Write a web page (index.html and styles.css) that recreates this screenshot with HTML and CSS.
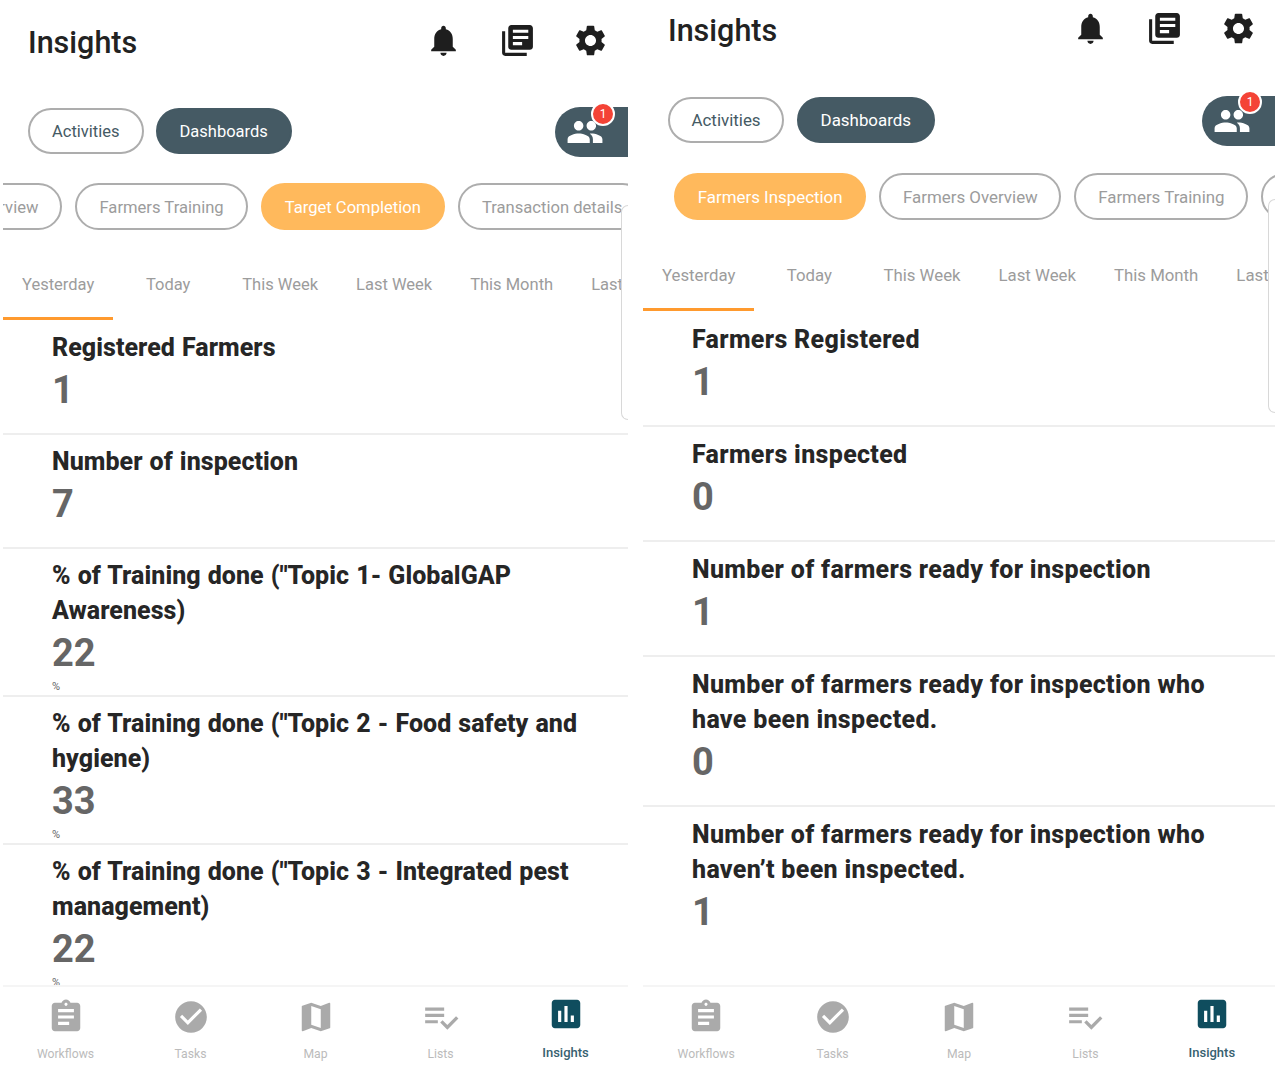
FILE: index.html
```html
<!DOCTYPE html>
<html>

<head>
    <meta charset="UTF-8">
    <meta name="viewport" content="width=device-width,initial-scale=1">
    <link rel="stylesheet" href="styles.css">
    <title>Insights</title>
</head>

<body>
    <svg class="icon-defs" width="0" height="0">
        <symbol id="i-bell" viewBox="0 0 24 24"><path d="M12 22c1.1 0 2-.9 2-2h-4c0 1.1.89 2 2 2zm6-6v-5c0-3.07-1.64-5.64-4.5-6.32V4c0-.83-.67-1.5-1.5-1.5s-1.5.67-1.5 1.5v.68C7.63 5.36 6 7.92 6 11v5l-2 2v1h16v-1l-2-2z"/></symbol>
        <symbol id="i-books" viewBox="0 0 24 24"><path d="M4 6H2v14c0 1.1.9 2 2 2h14v-2H4V6zm16-4H8c-1.1 0-2 .9-2 2v12c0 1.1.9 2 2 2h12c1.1 0 2-.9 2-2V4c0-1.1-.9-2-2-2zm-1 9H9V9h10v2zm-4 4H9v-2h6v2zm4-8H9V5h10v2z"/></symbol>
        <symbol id="i-gear" viewBox="0 0 24 24"><path d="M19.14 12.94c.04-.3.06-.61.06-.94 0-.32-.02-.64-.07-.94l2.03-1.58c.18-.14.23-.41.12-.61l-1.92-3.32c-.12-.22-.37-.29-.59-.22l-2.39.96c-.5-.38-1.03-.7-1.62-.94l-.36-2.54c-.04-.24-.24-.41-.48-.41h-3.84c-.24 0-.43.17-.47.41l-.36 2.54c-.59.24-1.13.57-1.62.94l-2.39-.96c-.22-.08-.47 0-.59.22L2.74 8.87c-.12.21-.08.47.12.61l2.03 1.58c-.05.3-.09.63-.09.94s.02.64.07.94l-2.03 1.58c-.18.14-.23.41-.12.61l1.92 3.32c.12.22.37.29.59.22l2.39-.96c.5.38 1.03.7 1.62.94l.36 2.54c.05.24.24.41.48.41h3.84c.24 0 .44-.17.47-.41l.36-2.54c.59-.24 1.13-.56 1.62-.94l2.39.96c.22.08.47 0 .59-.22l1.92-3.32c.12-.22.07-.47-.12-.61l-2.01-1.58zM12 15.6c-1.98 0-3.6-1.62-3.6-3.6s1.62-3.6 3.6-3.6 3.6 1.62 3.6 3.6-1.62 3.6-3.6 3.6z"/></symbol>
        <symbol id="i-people" viewBox="0 0 24 24"><path d="M16 11c1.66 0 2.99-1.34 2.99-3S17.66 5 16 5c-1.66 0-3 1.34-3 3s1.34 3 3 3zm-8 0c1.66 0 2.99-1.34 2.99-3S9.66 5 8 5C6.34 5 5 6.34 5 8s1.34 3 3 3zm0 2c-2.33 0-7 1.17-7 3.5V19h14v-2.5c0-2.33-4.67-3.5-7-3.5zm8 0c-.29 0-.62.02-.97.05 1.16.84 1.97 1.97 1.97 3.45V19h6v-2.5c0-2.33-4.67-3.5-7-3.5z"/></symbol>
        <symbol id="i-workflows" viewBox="0 0 24 24"><path d="M19 3h-4.18C14.4 1.84 13.3 1 12 1c-1.3 0-2.4.84-2.82 2H5c-1.1 0-2 .9-2 2v14c0 1.1.9 2 2 2h14c1.1 0 2-.9 2-2V5c0-1.1-.9-2-2-2zm-7 0c.55 0 1 .45 1 1s-.45 1-1 1-1-.45-1-1 .45-1 1-1zm2 14H7v-2h7v2zm3-4H7v-2h10v2zm0-4H7V7h10v2z"/></symbol>
        <symbol id="i-tasks" viewBox="0 0 24 24"><path d="M12 2C6.48 2 2 6.48 2 12s4.48 10 10 10 10-4.48 10-10S17.52 2 12 2zm-2 15l-5-5 1.41-1.41L10 14.17l7.59-7.59L19 8l-9 9z"/></symbol>
        <symbol id="i-map" viewBox="0 0 24 24"><path d="M20.5 3l-.16.03L15 5.1 9 3 3.36 4.9c-.21.07-.36.25-.36.48V20.5c0 .28.22.5.5.5l.16-.03L9 18.9l6 2.1 5.64-1.9c.21-.07.36-.25.36-.48V3.5c0-.28-.22-.5-.5-.5zM15 19l-6-2.11V5l6 2.11V19z"/></symbol>
        <symbol id="i-lists" viewBox="0 0 24 24"><path d="M14 10H2v2h12v-2zm0-4H2v2h12V6zM2 16h8v-2H2v2zm19.5-4.5L23 13l-6.99 7-4.51-4.5L13 14l3.01 3 5.49-5.5z"/></symbol>
        <symbol id="i-insights" viewBox="0 0 24 24"><path d="M19 3H5c-1.1 0-2 .9-2 2v14c0 1.1.9 2 2 2h14c1.1 0 2-.9 2-2V5c0-1.1-.9-2-2-2zM9 17H7v-7h2v7zm4 0h-2V7h2v10zm4 0h-2v-4h2v4z"/></symbol>
    </svg>

    <div class="screens">
        <section class="phone phone-left">
            <header class="top-bar">
                <h1>Insights</h1>
                <div class="top-icons">
                    <svg><use href="#i-bell"></use></svg>
                    <svg><use href="#i-books"></use></svg>
                    <svg><use href="#i-gear"></use></svg>
                </div>
            </header>
            <div class="switch-row">
                <span class="pill">Activities</span>
                <span class="pill pill-dark">Dashboards</span>
                <span class="group-btn">
                    <svg><use href="#i-people"></use></svg>
                    <span class="badge">1</span>
                </span>
            </div>
            <div class="chips">
                <span class="chip">Farmers Overview</span>
                <span class="chip">Farmers Training</span>
                <span class="chip chip-on">Target Completion</span>
                <span class="chip">Transaction details</span>
            </div>
            <nav class="tabs">
                <span class="tab tab-on">Yesterday</span>
                <span class="tab">Today</span>
                <span class="tab">This Week</span>
                <span class="tab">Last Week</span>
                <span class="tab">This Month</span>
                <span class="tab">Last Month</span>
            </nav>
            <div class="side-card"></div>
            <div class="stats">
                <div class="stat">
                    <h2>Registered Farmers</h2>
                    <div class="num">1</div>
                </div>
                <div class="stat">
                    <h2>Number of inspection</h2>
                    <div class="num">7</div>
                </div>
                <div class="stat stat-unit">
                    <h2>% of Training done ("Topic 1- GlobalGAP Awareness)</h2>
                    <div class="num">22</div>
                    <div class="unit">%</div>
                </div>
                <div class="stat stat-unit">
                    <h2>% of Training done ("Topic 2 - Food safety and hygiene)</h2>
                    <div class="num">33</div>
                    <div class="unit">%</div>
                </div>
                <div class="stat stat-unit">
                    <h2>% of Training done ("Topic 3 - Integrated pest management)</h2>
                    <div class="num">22</div>
                    <div class="unit">%</div>
                </div>
            </div>
            <footer class="bottom-nav">
                <span class="nav-item"><svg><use href="#i-workflows"></use></svg>Workflows</span>
                <span class="nav-item"><svg><use href="#i-tasks"></use></svg>Tasks</span>
                <span class="nav-item"><svg><use href="#i-map"></use></svg>Map</span>
                <span class="nav-item"><svg><use href="#i-lists"></use></svg>Lists</span>
                <span class="nav-item nav-on"><svg><use href="#i-insights"></use></svg>Insights</span>
            </footer>
        </section>

        <section class="phone phone-right">
            <header class="top-bar">
                <h1>Insights</h1>
                <div class="top-icons">
                    <svg><use href="#i-bell"></use></svg>
                    <svg><use href="#i-books"></use></svg>
                    <svg><use href="#i-gear"></use></svg>
                </div>
            </header>
            <div class="switch-row">
                <span class="pill">Activities</span>
                <span class="pill pill-dark">Dashboards</span>
                <span class="group-btn">
                    <svg><use href="#i-people"></use></svg>
                    <span class="badge">1</span>
                </span>
            </div>
            <div class="chips">
                <span class="chip chip-on">Farmers Inspection</span>
                <span class="chip">Farmers Overview</span>
                <span class="chip">Farmers Training</span>
                <span class="chip">Target Completion</span>
            </div>
            <nav class="tabs">
                <span class="tab tab-on">Yesterday</span>
                <span class="tab">Today</span>
                <span class="tab">This Week</span>
                <span class="tab">Last Week</span>
                <span class="tab">This Month</span>
                <span class="tab">Last Month</span>
            </nav>
            <div class="side-card"></div>
            <div class="stats">
                <div class="stat">
                    <h2>Farmers Registered</h2>
                    <div class="num">1</div>
                </div>
                <div class="stat">
                    <h2>Farmers inspected</h2>
                    <div class="num">0</div>
                </div>
                <div class="stat">
                    <h2>Number of farmers ready for inspection</h2>
                    <div class="num">1</div>
                </div>
                <div class="stat">
                    <h2>Number of farmers ready for inspection who have been inspected.</h2>
                    <div class="num">0</div>
                </div>
                <div class="stat stat-last">
                    <h2>Number of farmers ready for inspection who haven’t been inspected.</h2>
                    <div class="num">1</div>
                </div>
            </div>
            <footer class="bottom-nav">
                <span class="nav-item"><svg><use href="#i-workflows"></use></svg>Workflows</span>
                <span class="nav-item"><svg><use href="#i-tasks"></use></svg>Tasks</span>
                <span class="nav-item"><svg><use href="#i-map"></use></svg>Map</span>
                <span class="nav-item"><svg><use href="#i-lists"></use></svg>Lists</span>
                <span class="nav-item nav-on"><svg><use href="#i-insights"></use></svg>Insights</span>
            </footer>
        </section>
    </div>
</body>

</html>
```

FILE: styles.css
```css
*,
*::before,
*::after {
    box-sizing: border-box;
    padding: 0;
    margin: 0;
}

body {
    height: 1092px;
    overflow: hidden;
    background: #fff;
    font-family: Roboto, "Liberation Sans", sans-serif;
}

.icon-defs {
    position: absolute;
}

.screens {
    display: flex;
    height: 100%;
    padding-left: 3px;
    gap: 15px;
}

.phone {
    position: relative;
    display: flex;
    flex-direction: column;
    height: 985px;
}

.phone-left {
    width: 625px;
}

.phone-right {
    width: 632px;
}

.top-bar {
    display: flex;
    justify-content: space-between;
    align-items: center;
    padding-left: 25px;
}

.phone-left .top-bar {
    height: 84px;
}

.phone-right .top-bar {
    height: 60px;
}

.top-bar h1 {
    font-size: 30.5px;
    font-weight: 500;
    color: #222;
}

.top-icons {
    display: flex;
    gap: 36.5px;
    margin-top: -3px;
    padding-right: 19px;
    fill: #1e1e1e;
}

.phone-right .top-icons {
    gap: 37px;
    padding-right: 18px;
}

.top-icons svg {
    width: 37px;
    height: 37px;
}

.switch-row {
    display: flex;
    align-items: center;
    gap: 12px;
    height: 50px;
    padding-left: 25px;
    overflow: hidden;
}

.phone-left .switch-row {
    margin-top: 23px;
}

.phone-right .switch-row {
    gap: 13px;
    margin-top: 36px;
}

.pill {
    display: flex;
    align-items: center;
    height: 46px;
    margin-bottom: 2px;
    padding: 0 22px;
    border: 2px solid #adadad;
    border-radius: 24px;
    font-size: 16.5px;
    color: #455a64;
}

.phone-right .pill {
    padding: 0 21.5px;
    font-size: 16.9px;
}

.pill-dark {
    background: #455a64;
    border-color: #455a64;
    color: #fff;
}

.group-btn {
    display: flex;
    align-items: center;
    width: 73px;
    height: 50px;
    margin-left: auto;
    padding-left: 11px;
    background: #455a64;
    border-radius: 25px 0 0 25px;
    fill: #fff;
}

.group-btn svg {
    width: 38px;
    height: 38px;
}

.badge {
    position: absolute;
    top: 102px;
    left: 588px;
    width: 24px;
    height: 24px;
    background: #f44336;
    border: 2px solid #fff;
    border-radius: 50%;
    font-size: 12px;
    line-height: 20px;
    text-align: center;
    color: #fff;
}

.phone-right .badge {
    top: 90px;
    left: 595px;
}

.chips {
    display: flex;
    gap: 13px;
    overflow: hidden;
}

.phone-left .chips {
    margin-top: 26px;
}

.phone-left .chip:first-child {
    margin-left: -121px;
}

.phone-right .chips {
    margin-top: 27px;
    padding-left: 31px;
}

.chip {
    flex: none;
    height: 47px;
    padding: 0 22px;
    border: 2px solid #adadad;
    border-radius: 24px;
    font-size: 16.6px;
    line-height: 45px;
    color: #9c9c9c;
}

.phone-right .chip {
    padding: 0 21.7px;
    font-size: 16.9px;
}

.chip-on {
    background: #ffb95c;
    border-color: #ffb95c;
    color: #fff;
}

.tabs {
    display: flex;
    overflow: hidden;
}

.phone-left .tabs {
    height: 70px;
    margin-top: 20px;
}

.phone-right .tabs {
    height: 72px;
    margin-top: 19px;
}

.tab {
    flex: none;
    display: flex;
    align-items: center;
    justify-content: center;
    min-width: 110px;
    padding: 1px 19px 0;
    border-bottom: 3px solid transparent;
    font-size: 16.5px;
    color: #9c9c9c;
}

.phone-right .tab {
    padding-top: 3px;
    font-size: 16.8px;
}

.tab-on {
    border-bottom-color: #ff9a2e;
}

/* edge of the next card peeking in from the right */
.side-card {
    position: absolute;
    top: 205px;
    right: 0;
    width: 7px;
    height: 215px;
    background: #fff;
    border: 1px solid #d8d8d8;
    border-right: none;
    border-radius: 8px 0 0 8px;
}

.phone-right .side-card {
    top: 199px;
    height: 214px;
}

.stats {
    flex: 1;
    min-height: 0;
    padding-top: 1px;
    overflow: hidden;
}

.stat {
    padding: 9px 30px 17px 49px;
    border-bottom: 2px solid #eee;
}

.phone-right .stat {
    padding-top: 10px;
}

.stat-unit {
    padding-bottom: 0;
}

.stat-last {
    border-bottom: none;
}

.stat h2 {
    font-size: 25px;
    font-weight: 800;
    line-height: 35px;
    letter-spacing: 0.05px;
    word-spacing: 0.8px;
    color: #262626;
}

.phone-right .stat h2 {
    letter-spacing: 0.33px;
    word-spacing: 0;
}

.num {
    font-size: 38px;
    font-weight: 700;
    line-height: 51px;
    color: #666;
}

.unit {
    font-size: 11px;
    line-height: 16px;
    color: #666;
}

.bottom-nav {
    position: absolute;
    top: 985px;
    left: 0;
    right: 0;
    display: flex;
    height: 88px;
    border-top: 2px solid #f5f5f5;
    background: #fff;
}

.nav-item {
    flex: 1;
    display: flex;
    flex-direction: column;
    align-items: center;
    padding-top: 11px;
    font-size: 12.2px;
    color: #bbb;
    fill: #aaa;
}

.nav-item svg {
    width: 38px;
    height: 38px;
    margin-bottom: 11px;
}

.nav-on {
    font-size: 13px;
    font-weight: 500;
    color: #37616f;
    fill: #0f4d5e;
}

.nav-on svg {
    margin-top: -3px;
    margin-bottom: 12px;
}
```
